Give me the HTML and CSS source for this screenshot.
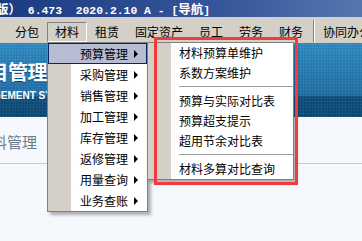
FILE: index.html
```html
<!DOCTYPE html>
<html lang="zh-CN">
<head>
    <meta charset="UTF-8">
    <title>导航</title>
    <link rel="stylesheet" href="styles.css">
</head>
<body>
    <div class="window">
        <div class="titlebar"><span class="cjk cut">版）</span> 6.473  2020.2.10 A - [<span class="cjk">导航</span>]</div>

        <div class="menubar">
            <div class="menu-item">分包</div>
            <div class="menu-item pressed">材料</div>
            <div class="menu-item">租赁</div>
            <div class="menu-item">固定资产</div>
            <div class="menu-item">员工</div>
            <div class="menu-item">劳务</div>
            <div class="menu-item">财务</div>
            <div class="menu-sep"></div>
            <div class="menu-item">协同办公</div>
        </div>

        <div class="banner">
            <div class="banner-title">项目管理系统</div>
            <div class="banner-sub">MANAGEMENT SYSTEM</div>
        </div>

        <div class="crumb">
            <span class="crumb-text">材料管理</span>
            <span class="crumb-mark"></span>
        </div>
    </div>

    <!-- 材料 dropdown -->
    <div class="dropdown">
        <div class="drop-item active">预算管理<i class="arrow"></i></div>
        <div class="drop-item">采购管理<i class="arrow"></i></div>
        <div class="drop-item">销售管理<i class="arrow"></i></div>
        <div class="drop-item">加工管理<i class="arrow"></i></div>
        <div class="drop-item">库存管理<i class="arrow"></i></div>
        <div class="drop-item">返修管理<i class="arrow"></i></div>
        <div class="drop-item">用量查询<i class="arrow"></i></div>
        <div class="drop-item">业务查账<i class="arrow"></i></div>
    </div>

    <!-- 预算管理 submenu -->
    <div class="submenu">
        <div class="sub-item">材料预算单维护</div>
        <div class="sub-item">系数方案维护</div>
        <div class="sub-sep"></div>
        <div class="sub-item">预算与实际对比表</div>
        <div class="sub-item">预算超支提示</div>
        <div class="sub-item">超用节余对比表</div>
        <div class="sub-sep"></div>
        <div class="sub-item">材料多算对比查询</div>
    </div>

    <div class="highlight-box"></div>
</body>
</html>
```

FILE: styles.css
```css
* {
    margin: 0;
    padding: 0;
    box-sizing: border-box;
}

body {
    width: 362px;
    height: 241px;
    overflow: hidden;
    position: relative;
    background: #f5f9fd;
    font-family: 'Noto Sans CJK SC', sans-serif;
    font-size: 12px;
    color: #000;
}

.window {
    display: flex;
    flex-direction: column;
}

/* Title bar */
.titlebar {
    height: 17px;
    line-height: 17px;
    background: linear-gradient(90deg, #1b3b82 0%, #36559a 60%, #5676b0 100%);
    color: #fff;
    font-family: 'Liberation Mono', 'Noto Sans CJK SC', monospace;
    font-size: 11.4px;
    font-weight: bold;
    white-space: pre;
    overflow: hidden;
}

.titlebar .cjk {
    font-family: 'Noto Sans CJK SC', sans-serif;
    font-size: 12.5px;
}

.titlebar .cut {
    margin-left: -4px;
}

/* Menu bar */
.menubar {
    height: 26px;
    background: #d4d0c8;
    display: flex;
    align-items: flex-end;
    padding: 0 0 1px 7px;
}

.menu-item {
    height: 20px;
    line-height: 20px;
    padding: 0 8px;
    white-space: nowrap;
}

.menu-item.pressed {
    padding: 0 7px;
    border: 1px solid;
    border-color: #808080 #fff #fff #808080;
    line-height: 18px;
}

.menu-sep {
    width: 2px;
    height: 22px;
    margin-left: 2px;
    border-left: 1px solid #808080;
    border-right: 1px solid #fff;
}

/* Banner */
.banner {
    height: 74px;
    overflow: hidden;
    color: #fff;
    font-weight: bold;
    background:
        repeating-linear-gradient(90deg, rgba(255, 255, 255, 0.05) 0 1px, transparent 1px 3px),
        repeating-linear-gradient(0deg, rgba(255, 255, 255, 0.05) 0 1px, transparent 1px 3px),
        linear-gradient(180deg, #2a86bd 0, #1e6aa0 52px, #0c4a77 54px, #0b4670 74px);
    padding-top: 19px;
}

.banner-title {
    font-size: 20px;
    line-height: 20px;
    letter-spacing: -0.5px;
    margin-left: -31px;
    white-space: nowrap;
    text-shadow: 0 1px 1px rgba(0, 40, 80, 0.6);
}

.banner-sub {
    font-family: 'Liberation Sans', sans-serif;
    font-size: 10px;
    line-height: 12px;
    margin-top: 8px;
    margin-left: -37px;
    white-space: nowrap;
}

/* Breadcrumb row */
.crumb {
    height: 47px;
    padding: 14px 0 12px;
    border-bottom: 1px solid #c5ccd3;
    display: flex;
    align-items: center;
}

.crumb-text {
    font-size: 15px;
    color: #6b7a88;
    margin-left: -23px;
    white-space: nowrap;
}

.crumb-mark {
    width: 2px;
    height: 6px;
    background: #a7b1bb;
    margin-left: 10px;
    margin-top: -4px;
}

/* Dropdown menus */
.dropdown,
.submenu {
    position: absolute;
    top: 42px;
    border: 1px solid #808080;
    background: linear-gradient(90deg, #d4d0c8 23px, #fff 23px);
    box-shadow: 3px 3px 3px rgba(0, 0, 0, 0.3);
}

.dropdown {
    left: 47px;
    width: 101px;
    height: 170px;
}

.drop-item {
    height: 21px;
    display: flex;
    align-items: center;
    padding: 0 8px 0 31px;
    border: 1px solid transparent;
    white-space: nowrap;
}

.drop-item.active {
    background: #b6bdd2;
    border-color: #0a246a;
}

.arrow {
    margin-left: auto;
    width: 0;
    height: 0;
    border-left: 4px solid #000;
    border-top: 4px solid transparent;
    border-bottom: 4px solid transparent;
}

.submenu {
    left: 147px;
    width: 147px;
    height: 138px;
}

.sub-item {
    height: 20px;
    line-height: 20px;
    padding-left: 31px;
    white-space: nowrap;
}

.sub-sep {
    height: 8px;
    margin-left: 31px;
    display: flex;
    align-items: center;
}

.sub-sep::before {
    content: '';
    flex: 1;
    border-top: 1px solid #a0a0a0;
    border-bottom: 1px solid #fff;
}

/* Red annotation frame */
.highlight-box {
    position: absolute;
    left: 154px;
    top: 37px;
    width: 144px;
    height: 148px;
    border: 3px solid #f03c3c;
}
```
